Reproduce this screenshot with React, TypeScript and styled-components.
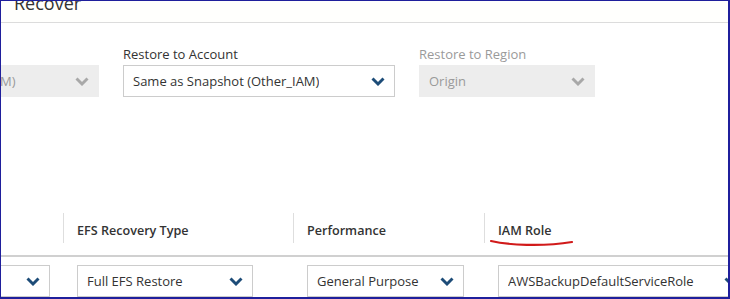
import React from "react";
import styled, { createGlobalStyle } from "styled-components";

const GlobalStyle = createGlobalStyle`
  html, body { margin: 0; padding: 0; background: #ffffff; }
  body { font-family: "Open Sans", "Liberation Sans", sans-serif; color: #333; }
  * { box-sizing: border-box; }
`;

const Frame = styled.div`
  width: 730px;
  height: 299px;
  border-style: solid;
  border-color: #1f1f9c;
  border-width: 1px 2px 2px 1px;
  overflow: hidden;
  background: #ffffff;
  position: relative;
`;

const TitleBar = styled.div`
  height: 22px;
  display: flex;
  align-items: flex-end;
  padding: 0 0 7px 13px;
  border-bottom: 1px solid #dcdcdc;
  background: #fffffd;
  overflow: hidden;
`;

const Title = styled.h1`
  margin: 0;
  font-size: 18px;
  line-height: 24px;
  font-weight: 400;
  color: #333;
`;

const FieldRow = styled.div`
  display: flex;
  gap: 24px;
  margin-left: -174px;
  padding-top: 22px;
`;

const Field = styled.div<{ $w: number }>`
  width: ${(p) => p.$w}px;
  flex: none;
  display: flex;
  flex-direction: column;
  gap: 2px;
`;

const Label = styled.label<{ $disabled?: boolean }>`
  font-size: 13px;
  line-height: 18px;
  color: ${(p) => (p.$disabled ? "#9a9a9a" : "#333")};
  white-space: nowrap;
`;

const SelectBox = styled.div<{ $disabled?: boolean; $w?: number }>`
  height: 32px;
  width: ${(p) => (p.$w ? `${p.$w}px` : "100%")};
  flex: none;
  display: flex;
  align-items: center;
  justify-content: space-between;
  padding: 0 9px 0 9px;
  border: 1px solid ${(p) => (p.$disabled ? "#ededed" : "#cccccc")};
  background: ${(p) => (p.$disabled ? "#ededed" : "#ffffff")};
  color: ${(p) => (p.$disabled ? "#9a9a9a" : "#333")};
  font-size: 13px;
  white-space: nowrap;
  overflow: hidden;
`;

const SelectText = styled.span`
  overflow: hidden;
`;

const ChevronSvg = styled.svg`
  flex: none;
  width: 14px;
  height: 9px;
`;

const Chevron = ({ disabled }: { disabled?: boolean }) => (
  <ChevronSvg viewBox="0 0 14 9">
    <polyline
      points="1.5,1.5 7,7 12.5,1.5"
      fill="none"
      stroke={disabled ? "#a8a8a8" : "#1d4c78"}
      strokeWidth="2.9"
      strokeLinejoin="miter"
    />
  </ChevronSvg>
);

const Select = ({ value, disabled, w }: { value: string; disabled?: boolean; w?: number }) => (
  <SelectBox $disabled={disabled} $w={w}>
    <SelectText>{value}</SelectText>
    <Chevron disabled={disabled} />
  </SelectBox>
);

const Table = styled.div`
  margin-top: 108px;
  margin-left: -109px;
`;

const cols = "171px 230px 191px 1fr";

const HeaderRow = styled.div`
  display: grid;
  grid-template-columns: ${cols};
  height: 52px;
  border-bottom: 2px solid #d0d0d0;
`;

const HeaderCell = styled.div<{ $divider?: boolean }>`
  position: relative;
  display: flex;
  align-items: center;
  padding: 0 0 0 14px;
  font-size: 12.6px;
  font-weight: 600;
  color: #333;
  white-space: nowrap;
  &::before {
    content: "";
    display: ${(p) => (p.$divider ? "block" : "none")};
    position: absolute;
    left: 0;
    top: 8px;
    height: 30px;
    width: 1px;
    background: #dedede;
  }
`;

const BodyRow = styled.div`
  display: grid;
  grid-template-columns: ${cols};
  padding-top: 8px;
`;

const BodyCell = styled.div`
  padding-left: 14px;
  overflow: visible;
`;

const Annotation = styled.svg`
  position: absolute;
  left: 6px;
  top: 33px;
  width: 84px;
  height: 12px;
  pointer-events: none;
`;

export default function App() {
  return (
    <>
      <GlobalStyle />
      <Frame>
        <TitleBar>
          <Title>Recover</Title>
        </TitleBar>
        <FieldRow>
          <Field $w={272}>
            <Label>Source Account</Label>
            <Select value="Same as Account (Other_IAM)" disabled />
          </Field>
          <Field $w={272}>
            <Label>Restore to Account</Label>
            <Select value="Same as Snapshot (Other_IAM)" />
          </Field>
          <Field $w={176}>
            <Label $disabled>Restore to Region</Label>
            <Select value="Origin" disabled />
          </Field>
        </FieldRow>
        <Table>
          <HeaderRow>
            <HeaderCell>Destination EFS</HeaderCell>
            <HeaderCell $divider>EFS Recovery Type</HeaderCell>
            <HeaderCell $divider>Performance</HeaderCell>
            <HeaderCell $divider>
              IAM Role
              <Annotation viewBox="0 0 84 12">
                <path
                  d="M1 3 C 18 7, 52 9, 82 4"
                  fill="none"
                  stroke="#d11a1a"
                  strokeWidth="2.2"
                  strokeLinecap="round"
                />
              </Annotation>
            </HeaderCell>
          </HeaderRow>
          <BodyRow>
            <BodyCell>
              <Select value="fs-0a1b2c3d" w={144} />
            </BodyCell>
            <BodyCell>
              <Select value="Full EFS Restore" w={176} />
            </BodyCell>
            <BodyCell>
              <Select value="General Purpose" w={157} />
            </BodyCell>
            <BodyCell>
              <Select value="AWSBackupDefaultServiceRole" w={250} />
            </BodyCell>
          </BodyRow>
        </Table>
      </Frame>
    </>
  );
}
